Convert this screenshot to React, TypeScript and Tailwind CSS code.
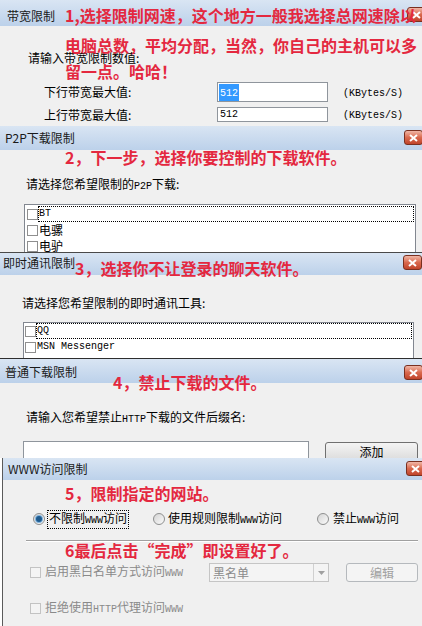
import React from "react";

const M = ({ children }: { children: React.ReactNode }) => (
  <span className="font-['Liberation_Mono',monospace] text-[10px]">{children}</span>
);

function Close({ className }: { className: string }) {
  return (
    <div
      className={`w-[19px] h-[15px] rounded-[3px] border border-[#7a3020] bg-gradient-to-b from-[#efb6a6] via-[#d9694e] to-[#c0442a] flex items-center justify-center shrink-0 ${className}`}
    >
      <svg width="9" height="8" viewBox="0 0 9 8">
        <path d="M1 1 L8 7 M8 1 L1 7" stroke="white" strokeWidth="2" />
      </svg>
    </div>
  );
}

function Box({ disabled }: { disabled?: boolean }) {
  return (
    <span
      className={
        disabled
          ? "w-[11px] h-[11px] border border-[#c3c3c3] bg-[#f4f4f4] shrink-0"
          : "w-[11px] h-[11px] border border-[#8f8f8f] bg-white shrink-0"
      }
    />
  );
}

function Radio({ on }: { on?: boolean }) {
  return (
    <span className="w-[12px] h-[12px] rounded-full border border-[#8e8f8f] bg-gradient-to-br from-[#d4d4d4] to-[#fbfbfb] flex items-center justify-center shrink-0">
      {on && <span className="w-[6px] h-[6px] rounded-full bg-[#1d5a8e] ring-1 ring-[#7fb2dc]" />}
    </span>
  );
}

function ListRow({ focused, children }: { focused?: boolean; children: React.ReactNode }) {
  return (
    <div className="h-[16px] flex items-center">
      <Box />
      <div
        className={
          focused
            ? "flex-1 h-[16px] border border-dotted border-black flex items-center leading-[14px]"
            : "flex-1 h-[16px] border border-transparent flex items-center leading-[14px]"
        }
      >
        {children}
      </div>
    </div>
  );
}

const red = "absolute text-[#e4283f] font-bold text-[16px] whitespace-nowrap";
const bar = "flex items-start justify-between bg-gradient-to-b from-[#d9e5f3] to-[#bcd1ea]";
const tt = "text-[12px] leading-[16px] text-[#1a1a1a]";

export default function App() {
  return (
    <div className="w-[422px] h-[626px] overflow-hidden bg-white font-['Noto_Sans_CJK_SC',sans-serif] text-[12px] text-black leading-[16px]">
      {/* Panel 1 */}
      <div className="relative h-[126px] bg-[#f0f0f0] overflow-hidden">
        <div className={`h-[26px] pl-[7px] ${bar}`}>
          <span className={`mt-[8px] ${tt}`}>带宽限制</span>
          <Close className="mt-[7px] -mr-[4px]" />
        </div>
        <div className="pt-[24px] pl-[28px]">请输入带宽限制数值:</div>
        <div className="mt-[16px] pl-[44px] flex items-center h-[20px]">
          <span className="w-[173px]">下行带宽最大值:</span>
          <div className="w-[111px] h-[20px] border border-[#8f959c] bg-white flex items-center pl-[1px]">
            <span className="bg-[#3399ff] text-white px-[1px] leading-[14px]">
              <M>512</M>
            </span>
          </div>
          <span className="ml-[15px]">
            <M>(KBytes/S)</M>
          </span>
        </div>
        <div className="mt-[5px] pl-[44px] flex items-center h-[15px]">
          <span className="w-[173px]">上行带宽最大值:</span>
          <div className="w-[111px] h-[15px] border border-[#8f959c] bg-white flex items-center pl-[2px]">
            <M>512</M>
          </div>
          <span className="ml-[15px]">
            <M>(KBytes/S)</M>
          </span>
        </div>
        <div className={`${red} top-0 left-[65px]`}>
          <div className="leading-[30px]">1,选择限制网速，这个地方一般我选择总网速除以</div>
          <div className="leading-[30px]">电脑总数，平均分配，当然，你自己的主机可以多</div>
          <div className="leading-[22px]">留一点。哈哈！</div>
        </div>
      </div>

      {/* Panel 2 */}
      <div className="relative h-[126px] bg-[#f0f0f0] overflow-hidden">
        <div className={`h-[24px] pl-[5px] ${bar}`}>
          <span className={`mt-[4px] ${tt}`}>P2P下载限制</span>
          <Close className="mt-[4px] -mr-[1px]" />
        </div>
        <div className="pt-[26px] pl-[26px]">
          请选择您希望限制的<M>P2P</M>下载:
        </div>
        <div className="mt-[9px] ml-[24px] w-[392px] h-[60px] border border-[#828790] bg-white pt-[1px] pl-[2px] pr-[1px]">
          <ListRow focused>
            <M>BT</M>
          </ListRow>
          <ListRow>电骡</ListRow>
          <ListRow>电驴</ListRow>
        </div>
        <div className={`${red} top-[20px] left-[65px] leading-[22px]`}>2，下一步，选择你要控制的下载软件。</div>
      </div>

      {/* Panel 3 */}
      <div className="relative h-[106px] bg-[#f0f0f0] overflow-hidden border-t border-[#4a4a4a]">
        <div className={`h-[22px] pl-[3px] ${bar}`}>
          <span className={`mt-[2px] ${tt}`}>即时通讯限制</span>
          <Close className="mt-[2px]" />
        </div>
        <div className="pt-[20px] pl-[22px]">请选择您希望限制的即时通讯工具:</div>
        <div className="mt-[11px] ml-[23px] w-[391px] h-[50px] border border-[#828790] bg-white pl-[1px] pr-[1px]">
          <ListRow focused>
            <M>QQ</M>
          </ListRow>
          <ListRow>
            <M>MSN Messenger</M>
          </ListRow>
        </div>
        <div className={`${red} top-[4px] left-[75px] leading-[22px]`}>3，选择你不让登录的聊天软件。</div>
      </div>

      {/* Panel 4 */}
      <div className="relative h-[100px] bg-[#f0f0f0] overflow-hidden border-t border-[#2e2e2e]">
        <div className={`h-[24px] pl-[5px] ${bar}`}>
          <span className={`mt-[5px] ${tt}`}>普通下载限制</span>
          <Close className="mt-[6px] -mr-[1px]" />
        </div>
        <div className="pt-[26px] pl-[26px]">
          请输入您希望禁止<M>HTTP</M>下载的文件后缀名:
        </div>
        <div className="mt-[13px] flex items-start">
          <div className="ml-[23px] w-[286px] h-[20px] border border-[#8f959c] bg-white" />
          <div className="ml-[16px] mt-[1px] w-[93px] h-[19px] rounded-[3px] border border-[#707070] bg-gradient-to-b from-[#f4f4f4] to-[#dcdcdc] flex items-center justify-center">
            添加
          </div>
        </div>
        <div className={`${red} top-[12px] left-[113px] leading-[22px]`}>4，禁止下载的文件。</div>
      </div>

      {/* Panel 5 */}
      <div className="relative h-[168px] ml-[2px] bg-[#f0f0f0] overflow-hidden border-l border-[#5a5a5a]">
        <div className={`h-[22px] pl-[5px] ${bar}`}>
          <span className={`mt-[3px] ${tt}`}>WWW访问限制</span>
          <Close className="mt-[3px] -mr-[3px]" />
        </div>
        <div className="pt-[31px] pl-[30px] flex items-center h-[47px]">
          <div className="w-[120px] flex items-center">
            <Radio on />
            <span className="ml-[2px] border border-dotted border-black px-[1px] leading-[14px]">
              不限制<M>WWW</M>访问
            </span>
          </div>
          <div className="w-[164px] flex items-center">
            <Radio />
            <span className="ml-[3px]">
              使用规则限制<M>WWW</M>访问
            </span>
          </div>
          <div className="flex items-center">
            <Radio />
            <span className="ml-[4px]">
              禁止<M>WWW</M>访问
            </span>
          </div>
        </div>
        <div className="mt-[13px] ml-[23px] w-[392px] border-t border-[#a0a0a0] border-b border-b-white" />
        <div className="mt-[21px] pl-[27px] flex items-center h-[19px]">
          <div className="w-[179px] flex items-center text-[#8a8a8a]">
            <Box disabled />
            <span className="ml-[4px]">
              启用黑白名单方式访问<M>WWW</M>
            </span>
          </div>
          <div className="w-[120px] h-[19px] border border-[#c5c5c5] bg-[#f4f4f4] flex items-center text-[#8a8a8a]">
            <span className="flex-1 pl-[3px]">黑名单</span>
            <span className="w-[15px] h-full border-l border-[#d0d0d0] flex items-center justify-center">
              <svg width="7" height="4" viewBox="0 0 7 4">
                <path d="M0 0 L7 0 L3.5 4 Z" fill="#a0a0a0" />
              </svg>
            </span>
          </div>
          <div className="ml-[17px] w-[72px] h-[19px] rounded-[3px] border border-[#b5b9bd] bg-[#f4f4f4] flex items-center justify-center text-[#a0a0a0]">
            编辑
          </div>
        </div>
        <div className="mt-[18px] pl-[27px] flex items-center h-[16px] text-[#8a8a8a]">
          <Box disabled />
          <span className="ml-[4px]">
            拒绝使用<M>HTTP</M>代理访问<M>WWW</M>
          </span>
        </div>
        <div className={`${red} top-[24px] left-[62px] leading-[22px]`}>5，限制指定的网站。</div>
        <div className={`${red} top-[81px] left-[62px] leading-[22px]`}>6最后点击“完成”即设置好了。</div>
      </div>
    </div>
  );
}
